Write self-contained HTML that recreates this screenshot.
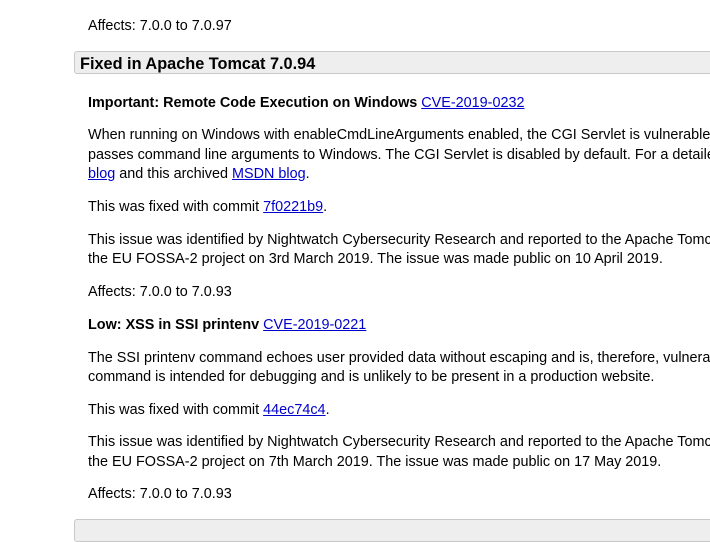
<html><head><style>
body{margin:0;width:710px;height:521px;overflow:hidden;background:#fff;font-family:"Liberation Sans",sans-serif;color:#000;position:relative}
.l{position:absolute;left:88px;font-size:14.4px;white-space:nowrap;line-height:20px}
a{color:#00c;text-decoration:underline}
.h{position:absolute;left:74px;width:660px;height:23px;background:#eee;border:1px solid #c8c8c8;border-radius:3px;box-sizing:border-box}
.ht{position:absolute;left:80px;font-size:16.3px;font-weight:bold;line-height:22px;white-space:nowrap}
</style></head><body>
<div class="l" style="top:16px">Affects: 7.0.0 to 7.0.97</div>
<div class="h" style="top:51px"></div>
<div class="ht" style="top:53px">Fixed in Apache Tomcat 7.0.94</div>
<div class="l" style="top:93px"><b>Important: Remote Code Execution on Windows</b> <a>CVE-2019-0232</a></div>
<div class="l" style="top:125px">When running on Windows with enableCmdLineArguments enabled, the CGI Servlet is vulnerable</div>
<div class="l" style="top:145px">passes command line arguments to Windows. The CGI Servlet is disabled by default. For a detailed</div>
<div class="l" style="top:164px"><a>blog</a> and this archived <a>MSDN blog</a>.</div>
<div class="l" style="top:197px">This was fixed with commit <a>7f0221b9</a>.</div>
<div class="l" style="top:230px">This issue was identified by Nightwatch Cybersecurity Research and reported to the Apache Tomcat</div>
<div class="l" style="top:249px">the EU FOSSA-2 project on 3rd March 2019. The issue was made public on 10 April 2019.</div>
<div class="l" style="top:282px">Affects: 7.0.0 to 7.0.93</div>
<div class="l" style="top:315px"><b>Low: XSS in SSI printenv</b> <a>CVE-2019-0221</a></div>
<div class="l" style="top:348px">The SSI printenv command echoes user provided data without escaping and is, therefore, vulnerable</div>
<div class="l" style="top:367px">command is intended for debugging and is unlikely to be present in a production website.</div>
<div class="l" style="top:400px">This was fixed with commit <a>44ec74c4</a>.</div>
<div class="l" style="top:432px">This issue was identified by Nightwatch Cybersecurity Research and reported to the Apache Tomcat</div>
<div class="l" style="top:452px">the EU FOSSA-2 project on 7th March 2019. The issue was made public on 17 May 2019.</div>
<div class="l" style="top:484px">Affects: 7.0.0 to 7.0.93</div>
<div class="h" style="top:519px"></div>
</body></html>
